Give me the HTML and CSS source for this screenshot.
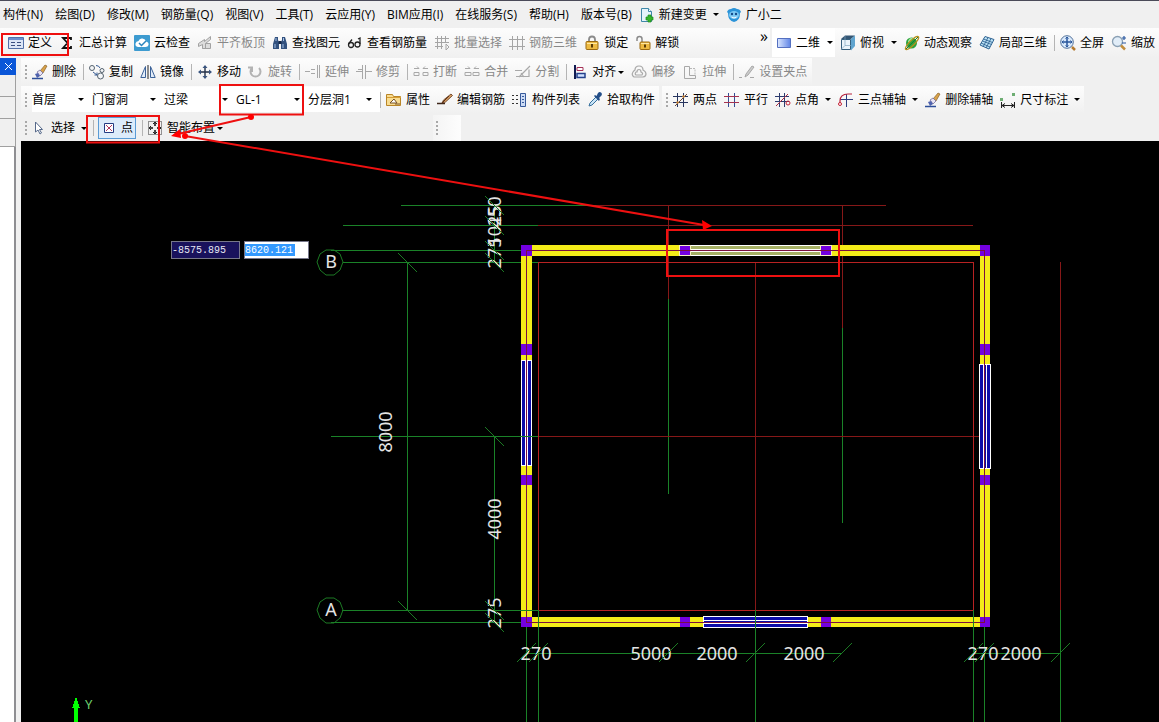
FILE: index.html
```
<!DOCTYPE html>
<html lang="zh-CN">
<head>
  <meta charset="UTF-8">
  <title>钢筋算量</title>
  <link rel="stylesheet" href="styles.css">
</head>
<body>
  <!-- Menu bar -->
  <nav class="menu-bar">
    <button class="btn">构件(N)</button>
    <button class="btn">绘图(D)</button>
    <button class="btn">修改(M)</button>
    <button class="btn">钢筋量(Q)</button>
    <button class="btn">视图(V)</button>
    <button class="btn">工具(T)</button>
    <button class="btn">云应用(Y)</button>
    <button class="btn">BIM应用(I)</button>
    <button class="btn">在线服务(S)</button>
    <button class="btn">帮助(H)</button>
    <button class="btn">版本号(B)</button>
    <button class="btn menu-tool"><svg class="icon" viewBox="0 0 16 16"><path d="M2.500 1.500h7l3 3v10h-10z" fill="#e4f3fb" stroke="#3f87a8"/><path d="M9.500 1.500v3h3" fill="#fff" stroke="#3f87a8"/><path d="M9 8h3v2h2v3h-2v2H9v-2H7v-3h2z" fill="#35b52c" stroke="#1e8a1b" stroke-width=".7"/></svg>新建变更<span class="caret"></span></button>
    <button class="btn menu-tool"><svg class="icon" viewBox="0 0 16 16"><path d="M1 5q1-3 4-3 3-2 6 0 3 0 4 3l-1 1q0 8-6 9-6-1-6-9z" fill="#2b93d8"/><ellipse cx="8" cy="8" rx="5" ry="4" fill="#7cc9f4"/><circle cx="6" cy="7" r="1.200" fill="#144b8a"/><circle cx="10" cy="7" r="1.200" fill="#144b8a"/><path d="M5.500 10q2.500 2 5 0" fill="none" stroke="#fff"/></svg>广小二</button>
  </nav>

  <!-- Main toolbar -->
  <div class="main-bar">
    <div class="group main-group">
      <button class="btn"><svg class="icon" viewBox="0 0 16 16"><path d="M.5 2.500h15v11H.5z" fill="#dce6f6" stroke="#5270a8"/><path d="M1 3h14v2H1z" fill="#6c8fce"/><path d="M3 7.500h4M3 10.500h4M9 7.500h4M9 10.500h4" stroke="#3a4f80"/></svg>定义</button>
      <button class="btn"><svg class="icon" viewBox="0 0 16 16"><path d="M12 5V3H4l4.500 5L4 13h8v-2" fill="none" stroke="#111" stroke-width="1.800"/></svg>汇总计算</button>
      <button class="btn"><svg class="icon" viewBox="0 0 16 16"><rect width="16" height="16" rx="1" fill="#3d9bd0"/><path d="M4 12q-3-.5-2.500-3.500Q2 6 4.500 6 5.500 3 8.500 3.500q3 .5 3.500 3 3 .5 2.500 3.500-.5 2-3 2z" fill="#fff"/><path d="M5 8l2.500 2.500L12 6" fill="none" stroke="#2b84bd" stroke-width="1.500"/></svg>云检查</button>
      <button class="btn" disabled><svg class="icon" viewBox="0 0 16 16"><path d="M1.500 8.500l6-4v2l6-5v3l-5 4v5h-3v-4l-4 2zM8.500 8.500h5v5h-8" fill="#dcdcdc" stroke="#a2a2a2"/></svg>平齐板顶</button>
      <button class="btn"><svg class="icon" viewBox="0 0 16 16"><path d="M3 2h3v3l1 2v7H1V9zM10 2h3l2 7v5H9V7l1-2z" fill="#33527f"/><path d="M6.500 6h3v3h-3z" fill="#16294a"/><path d="M3 9v4M11 9v4M4 3v3M11.500 3v3" stroke="#a9c3e8"/></svg>查找图元</button>
      <button class="btn"><svg class="icon" viewBox="0 0 16 16"><g fill="none" stroke="#222" stroke-width="1.300"><circle cx="4" cy="10" r="2.500"/><circle cx="10.500" cy="9.500" r="2.500"/><path d="M1.500 9L5 4.500M13 9V3l-2 1"/></g></svg>查看钢筋量</button>
      <button class="btn" disabled><svg class="icon" viewBox="0 0 16 16"><path d="M1 3.500h14M1 7.500h14M1 11.500h8M3.500 1v13M7.500 1v13M11.500 1v7M12 9v6l3-3z" fill="none" stroke="#a5a5a5"/></svg>批量选择</button>
      <button class="btn" disabled><svg class="icon" viewBox="0 0 16 16"><path d="M0 4.500h16M0 11.500h16M3.500 1v14M8.500 1v14M13.500 1v14" fill="none" stroke="#a5a5a5"/></svg>钢筋三维</button>
      <button class="btn"><svg class="icon" viewBox="0 0 16 16"><path d="M5 8V4.500q0-3 3-3t3 3V8" fill="none" stroke="#8a8a8a" stroke-width="1.800"/><rect x="2" y="6.500" width="12" height="8" rx="1" fill="#edba42" stroke="#9b6a12"/><path d="M3 8.500h10" stroke="#ffe8a2"/><path d="M8 9v3.500" stroke="#5a3b06" stroke-width="2"/></svg>锁定</button>
      <button class="btn"><svg class="icon" viewBox="0 0 16 16"><path d="M2 6V4q0-2.500 2.500-2.500T7 4v4" fill="none" stroke="#8a8a8a" stroke-width="1.500"/><rect x="5" y="7" width="10" height="7.500" rx="1" fill="#edba42" stroke="#9b6a12"/><path d="M6 8.500h8" stroke="#ffe8a2"/><path d="M10 9.500V12.500" stroke="#5a3b06" stroke-width="2"/></svg>解锁</button>
      <button class="btn more" aria-label="更多">»</button>
    </div>
    <div class="group view-group">
      <div class="mode">
        <svg class="icon" viewBox="0 0 16 16"><defs><linearGradient id="blue"><stop stop-color="#dbe7ff"/><stop offset="1" stop-color="#5f84e6"/></linearGradient></defs><path d="M1.500 3.500h13v9h-13z" fill="url(#blue)" stroke="#5570c0"/></svg>
        <div class="combo"><select class="combo-field" aria-label="视图模式"><option>二维</option></select></div>
      </div>
      <button class="btn"><svg class="icon" viewBox="0 0 16 16"><path d="M1 4l4-3.500h10L11 4z" fill="#345674"/><path d="M11 4l4-3.500V11l-4 4.500z" fill="#5fa4cf"/><path d="M1.500 4.500h9v10h-9z" fill="#e9f4fb" stroke="#345f7d"/><path d="M5 1v9.500l-4 4M5 10.500h6" stroke="#7fa5bf" fill="none" stroke-width=".7"/></svg>俯视<span class="caret far"></span></button>
      <button class="btn"><svg class="icon" viewBox="0 0 16 16"><circle cx="7.500" cy="8" r="5.500" fill="#2ba33c"/><path d="M4 6q2-4 5-3-1 3-5 5z" fill="#9de79c"/><ellipse cx="8" cy="8" rx="9" ry="2.500" transform="rotate(-45 8 8)" fill="none" stroke="#b8901c" stroke-width="1.200"/><path d="M2 14L14 2" stroke="#1c7a30"/></svg>动态观察</button>
      <button class="btn"><svg class="icon" viewBox="0 0 16 16"><path d="M6 1.500l9 3-5 9.500-9-4z" fill="#bfe4f7" stroke="#306493"/><path d="M3.500 6l9 3.500M9 2.500L4 12M12 3.500L7 13M4.500 4l9 3.500M2 8l9 4" fill="none" stroke="#306493" stroke-width=".9"/></svg>局部三维</button>
      <span class="sep"></span>
      <button class="btn"><svg class="icon" viewBox="0 0 16 16"><circle cx="7" cy="7" r="6.300" fill="#d9e9fb" stroke="#52719a"/><path d="M7 2v10M2 7h10" stroke="#28569c" stroke-width="1.500"/><path d="M5.500 3.500L7 2l1.500 1.500M5.500 10.500L7 12l1.500-1.500M3.500 5.500L2 7l1.500 1.500M10.500 5.500L12 7l-1.500 1.500" fill="none" stroke="#28569c"/><path d="M12 12l3 3" stroke="#b57a30" stroke-width="2.500"/></svg>全屏</button>
      <button class="btn"><svg class="icon" viewBox="0 0 16 16"><circle cx="6.500" cy="6.500" r="5" fill="#e1edf8" stroke="#8aa0b4" stroke-width="1.300"/><path d="M10 10.500l4 4" stroke="#c08c3c" stroke-width="2.500"/><path d="M13 1v4M11 3h4M11 8h4" stroke="#2857a0" stroke-width="1.200"/></svg>缩放</button>
    </div>
  </div>

  <div class="work">
    <!-- Docked panel, folded to the left -->
    <aside class="dock">
      <button class="dock-close" aria-label="关闭"><svg width="9" height="9" viewBox="0 0 9 9"><path d="M1 1l7 7M8 1L1 8" stroke="#fff"/></svg></button>
      <div class="dock-row"></div>
      <div class="dock-row"></div>
      <div class="dock-row"></div>
      <div class="dock-list"></div>
    </aside>

    <main class="stage">
      <!-- Edit toolbar -->
      <div class="bar">
        <div class="group">
          <span class="grip"></span>
          <button class="btn"><svg class="icon" viewBox="0 0 16 16"><path d="M8 7l5-6 2 1-4 7z" fill="#d8a24a" stroke="#7b5217" stroke-width=".6"/><path d="M5 8l3-2 3 3-3 3z" fill="#e8e3f2" stroke="#66608f" stroke-width=".7"/><path d="M3 10l3-1 2 3-3 2z" fill="#4f62ae"/><path d="M0 14.500h11" stroke="#2c4e98" stroke-width="1.500"/></svg>删除</button>
          <span class="sep"></span>
          <button class="btn"><svg class="icon" viewBox="0 0 16 16"><g fill="#f4f6f8" stroke="#55626e"><circle cx="3" cy="4" r="2.500"/><circle cx="13" cy="6.500" r="2"/><circle cx="11.500" cy="12" r="3"/></g><path d="M7 1.500q3 0 4 2.500M4 8l4 3M8 8.500V11H5.500" fill="none" stroke="#345a93"/></svg>复制</button>
          <button class="btn"><svg class="icon" viewBox="0 0 16 16"><path d="M5.500 2.500v11H.8zM10.500 2.500v11h4.700z" fill="#e3edf9" stroke="#3c6298"/><path d="M8 1v14" stroke="#222"/></svg>镜像</button>
          <span class="sep"></span>
          <button class="btn"><svg class="icon" viewBox="0 0 16 16"><path d="M8 2v12M2 8h12" stroke="#222f47" stroke-width="1.400"/><path d="M8 1L5.500 4h5zM8 15l-2.500-3h5zM1 8l3-2.500v5zM15 8l-3-2.500v5z" fill="#3a5580"/></svg>移动</button>
          <button class="btn" disabled><svg class="icon" viewBox="0 0 16 16"><path d="M4 4a5 5 0 1 0 7 0M4 8V3.500H0" fill="none" stroke="#b3b3b3" stroke-width="2"/></svg>旋转</button>
          <span class="sep"></span>
          <button class="btn" disabled><svg class="icon" viewBox="0 0 16 16"><path d="M0 7.500h5M6 5.500h4M6 9.500h4M12.500 1v13M14.500 1v13" stroke="#a8a8a8"/></svg>延伸</button>
          <button class="btn" disabled><svg class="icon" viewBox="0 0 16 16"><path d="M0 7.500h6M10 7.500h6M6.500 1v14M9.500 1v14M2 5.500h4" stroke="#a8a8a8"/></svg>修剪</button>
          <span class="sep"></span>
          <button class="btn" disabled><svg class="icon" viewBox="0 0 16 16"><path d="M1 8.500h5v3H1zM10 8.500h5v3h-5zM1 4.500h5l-2-2M12 2.500l-2 2h5" fill="none" stroke="#a8a8a8"/></svg>打断</button>
          <button class="btn" disabled><svg class="icon" viewBox="0 0 16 16"><path d="M1 8.500h6v3H1zM9 8.500h6v3H9zM1 4.500h5l-2-2M12 2.500l-2 2h5" fill="none" stroke="#a8a8a8"/></svg>合并</button>
          <button class="btn" disabled><svg class="icon" viewBox="0 0 16 16"><path d="M0 6.500h7M1 12.500h13v-7M4 13L15 2M6 9l3 4" fill="none" stroke="#a8a8a8" stroke-width="1.200"/></svg>分割</button>
          <span class="sep"></span>
          <button class="btn tight"><svg class="icon" viewBox="0 0 16 16"><path d="M3 1v14" stroke="#101b52" stroke-width="2"/><path d="M5 3.500h6v3H5z" fill="#fff" stroke="#a53057"/><path d="M5 9.500h8v4H5z" fill="#cfe0ff" stroke="#24418c" stroke-width="1.500"/></svg>对齐<span class="caret"></span></button>
          <button class="btn" disabled><svg class="icon" viewBox="0 0 16 16"><path d="M3 13q-3-2-1-5 1-1.500 2-2 0-4 4-4t4 4q3 1.500 3 4t-3 3zM5 11q-1.500-1 0-3h1q0-2.500 2-2.500T10 8q2.500 1 1 3z" fill="none" stroke="#a8a8a8" stroke-width="1.200"/></svg>偏移</button>
          <button class="btn" disabled><svg class="icon" viewBox="0 0 16 16"><path d="M2.500 14.500v-12h5v9h6v3z" fill="none" stroke="#a8a8a8"/><path d="M8 4.500h5v6" fill="none" stroke="#b8b8b8" stroke-dasharray="2 1"/></svg>拉伸</button>
          <span class="sep"></span>
          <button class="btn" disabled><svg class="icon" viewBox="0 0 16 16"><path d="M0 13.500h3M6 13l1-3 6-8 2 1-6 8zM11 13.500h4" fill="#ccc" stroke="#a8a8a8"/></svg>设置夹点</button>
        </div>
      </div>

      <!-- Component toolbar -->
      <div class="bar component-bar">
        <div class="group">
          <span class="grip"></span>
          <div class="combos">
            <div class="combo floor"><select class="combo-field" aria-label="楼层"><option>首层</option></select></div>
            <div class="combo"><select class="combo-field" aria-label="构件类别"><option>门窗洞</option></select></div>
            <div class="combo"><select class="combo-field" aria-label="构件类型"><option>过梁</option></select></div>
            <div class="combo"><select class="combo-field" aria-label="构件名称"><option>GL-1</option></select></div>
            <div class="combo"><select class="combo-field" aria-label="分层"><option>分层洞1</option></select></div>
          </div>
          <span class="sep first"></span>
          <button class="btn"><svg class="icon" viewBox="0 0 16 16"><path d="M.5 2.500h6l1 2h7v9H.5z" fill="#f8dc91" stroke="#b98527"/><path d="M1 5.500h14" stroke="#d69d33"/><path d="M4 11l4-4 3 4zM9 12h5" fill="#fff" stroke="#775126"/></svg>属性</button>
          <button class="btn"><svg class="icon" viewBox="0 0 16 16"><path d="M0 11.500h8" stroke="#3f2719" stroke-width="1.500"/><path d="M5 11l1.500-3L14 2l1.500 1.500L8.500 10z" fill="#d39b60" stroke="#5d3216" stroke-width=".8"/><path d="M5 11l7-7" stroke="#5d3216"/></svg>编辑钢筋</button>
          <button class="btn"><svg class="icon" viewBox="0 0 16 16"><path d="M0 3.500h2M4 3.500h2M0 7.500h2M4 7.500h2M0 11.500h2M4 11.500h2" stroke="#333"/><path d="M8.500 1.500h5v13h-5z" fill="#cddcf5" stroke="#375a9b"/><path d="M10 4.500h2M10 7.500h2M10 10.500h2" stroke="#375a9b"/></svg>构件列表</button>
          <button class="btn"><svg class="icon" viewBox="0 0 16 16"><path d="M2 14l1-3 6-6 2 2-6 6z" fill="#c9e4f7" stroke="#366f9c"/><path d="M7 4l5 5 1-2-1-1 2.500-2.500q1-2-.5-3t-3 .5L9.500 4 8 3z" fill="#234e88"/></svg>拾取构件</button>
        </div>
        <div class="group">
          <span class="grip"></span>
          <button class="btn"><svg class="icon" viewBox="0 0 16 16"><path d="M4.500 1v14M10.500 1v14M0 4.500h15M0 10.500h15" stroke="#27355f"/><path d="M2 14L14 2" stroke="#6f4c3a"/><circle cx="4.500" cy="10.500" r="1.200" fill="#c48031"/><circle cx="10.500" cy="4.500" r="1.200" fill="#c48031"/></svg>两点</button>
          <button class="btn"><svg class="icon" viewBox="0 0 16 16"><path d="M4.500 1v14M10.500 1v14" stroke="#354c94"/><path d="M0 4.500h15M0 10.500h15" stroke="#a63350"/></svg>平行</button>
          <button class="btn"><svg class="icon" viewBox="0 0 16 16"><path d="M4.500 1v14M9.500 1v14M0 4.500h14M0 9.500h14" stroke="#2d3c6f"/><path d="M1 14L13 2" stroke="#b02f43"/><circle cx="13" cy="11" r="2" fill="none" stroke="#c52236"/></svg>点角<span class="caret"></span></button>
          <button class="btn"><svg class="icon" viewBox="0 0 16 16"><path d="M8.500 2v13M2 7.500h13" stroke="#2d3c7f"/><path d="M2 12V9q0-7 8-7h4" fill="none" stroke="#b9243e" stroke-width="1.200"/><circle cx="2" cy="12" r="1.500" fill="#fff" stroke="#c52236"/></svg>三点辅轴<span class="caret"></span></button>
          <button class="btn"><svg class="icon" viewBox="0 0 16 16"><path d="M8 7l5-6 2 1-4 7z" fill="#d8a24a" stroke="#7b5217" stroke-width=".6"/><path d="M5 8l3-2 3 3-3 3z" fill="#e8e3f2" stroke="#66608f" stroke-width=".7"/><path d="M3 10l3-1 2 3-3 2z" fill="#4f62ae"/><path d="M0 14.500h11" stroke="#2c4e98" stroke-width="1.500"/></svg>删除辅轴</button>
          <button class="btn"><svg class="icon" viewBox="0 0 16 16"><path d="M1.500 10v6M14.500 10v6M2 13.500h12M5 11.500l-3 2 3 2M11 11.500l3 2-3 2" fill="none" stroke="#222"/><path d="M0 6h3v3H0zM12 1h3v3h-3z" fill="#6eae73"/></svg>尺寸标注<span class="caret"></span></button>
        </div>
      </div>

      <!-- Draw toolbar -->
      <div class="bar draw-bar">
        <div class="group draw-group">
          <span class="grip"></span>
          <button class="btn"><svg class="icon" viewBox="0 0 16 16"><path d="M4.500 2v10l2.500-2 2 4 1.500-1-2-3.500h3z" fill="#fff" stroke="#56698a"/></svg>选择<span class="caret"></span></button>
          <span class="sep"></span>
          <button class="btn pressed"><svg class="icon" viewBox="0 0 16 16"><path d="M3.500 3.500h9v9h-9z" fill="#fff" stroke="#243b82"/><path d="M5 5l6 6M11 5l-6 6" stroke="#b43b62"/></svg>点</button>
          <span class="sep"></span>
          <button class="btn tight"><svg class="icon" viewBox="0 0 16 16"><path d="M1.500 1.500h13v13h-13z" fill="none" stroke="#333" stroke-dasharray="1 1"/><path d="M8 2v4M8 10v4M2 8h4M10 8h4" stroke="#111" stroke-width="1.500"/><path d="M6 4l2-2 2 2M6 12l2 2 2-2M4 6L2 8l2 2M12 6l2 2-2 2" fill="none" stroke="#222"/></svg>智能布置<span class="caret"></span></button>
        </div>
        <div class="group empty-group"><span class="grip"></span></div>
      </div>

      <!-- Drawing area -->
      <div class="canvas">
        <svg class="plan" aria-label="平面图">
          <g transform="translate(-21 -141)">
            <g class="green">
              <path d="M401 205.500H596M343 225.500H538M331 250.500H521M343 262.500H538M331 436.500H538M342 610.500H538M331 622.500H521"/>
              <path d="M407.500 262V610M494.500 205V262M494.500 436V622M668.500 299V494M842.500 328V523"/>
              <path d="M526 653.500H842M973 653.500H1060"/>
            </g>
            <g class="axis">
              <path d="M596 205.500H886M538 225.500H973M668.500 205V299M842.500 205V328M755.500 262V610M1060.500 262V610M538 436.500H985"/>
            </g>
            <path class="room" d="M538.500 262.500H973.500V610.500H538.500z"/>

            <!-- Walls -->
            <path class="wall" d="M521 245H990V256H521zM521 617H990V627H521zM521 245H532V627H521zM980 245H990V627H980z"/>
            <path class="column" d="M521 245h11v11h-11zM980 245h10v11h-10zM521 344h11v11h-11zM980 344h10v11h-10zM521 475h11v10h-11zM980 475h10v10h-10zM521 617h11v10h-11zM980 617h10v10h-10zM680 617h10v10h-10zM821 617h10v10h-10z"/>

            <!-- Windows -->
            <g class="window">
              <path d="M521.500 360.500h10v105h-10zM525.500 360V466M527.500 360V466"/>
              <path d="M979.500 364.500h11v104h-11zM983.500 364V469M986.500 364V469"/>
              <path d="M703.500 616.500h104v11h-104zM703 620.500H808M703 623.500H808"/>
            </g>

            <!-- Lintel -->
            <path d="M690 245H821V256H690z" fill="#fff"/>
            <path d="M691 246H820V249H691zM691 252H820V255H691z" fill="#a6b065"/>
            <path d="M679.500 245.500h11v10h-11zM820.500 245.500h11v10h-11z" fill="#7300e0" stroke="#f5eec0"/>
            <path class="center" d="M526.500 250.500H984.500V622.500H526.500z"/>

            <g class="green">
              <path d="M521 436.500H538M521 610.500H538M526.500 627V722M538.500 610V722M755.500 610V722M973.500 610V722M984.500 627V722M1060.500 610V722"/>
            </g>

            <!-- Dimensions -->
            <g class="dim">
              <text x="536" y="660">270</text>
              <text x="651" y="660">5000</text>
              <text x="717" y="660">2000</text>
              <text x="804" y="660">2000</text>
              <text x="983" y="660">270</text>
              <text x="1021" y="660">2000</text>
              <text transform="translate(392 432) rotate(-90)">8000</text>
              <text transform="translate(501 519) rotate(-90)">4000</text>
              <text transform="translate(501 613) rotate(-90)">275</text>
              <text transform="translate(501 253) rotate(-90)">275</text>
              <text transform="translate(501 226) rotate(-90)">1025</text>
              <text transform="translate(501 212) rotate(-90)">450</text>
              <text x="331" y="268">B</text>
              <text x="331" y="616">A</text>
            </g>
            <path class="tick" d="M398 253l19 19M398 601l19 19M485 196l19 19M485 216l19 19M485 241l19 19M485 253l19 19M485 427l19 19M485 601l19 19M485 613l19 19M517 662l19-19M529 662l19-19M659 662l19-19M746 662l19-19M833 662l19-19M964 662l19-19M975 662l19-19M1051 662l19-19"/>
            <path class="bubble" d="M326 250h8l6 4 3 8-3 8-6 5h-8l-6-5-3-8 3-8zM326 598h8l6 4 3 8-3 8-6 5h-8l-6-5-3-8 3-8z"/>

            <!-- Coordinate arrow -->
            <path d="M76 697l4 11h-2v14h-4v-14h-2z" fill="#0f0"/>
            <text class="axis-name" x="85" y="709">Y</text>
          </g>
        </svg>
        <div class="coords">
          <input class="coord" value="-8575.895" aria-label="X">
          <input class="coord active" value="8620.121" aria-label="Y">
        </div>
      </div>
    </main>
  </div>

  <!-- Red marks over the window -->
  <svg class="marks">
    <path class="mark-box" d="M2 34H68V55H2zM220 85H303V114.500H220zM87 116H159V142.500H87zM667 230H839V276H667z"/>
    <path class="mark-line" d="M251 117L178 134M185 136L704 225"/>
    <path d="M171 136l9-7 1 9zM712 226l-10-6 1 10z" fill="#f00"/>
    <circle cx="251" cy="117" r="3" fill="#f00"/>
    <circle cx="185" cy="136" r="3" fill="#f00"/>
  </svg>
</body>
</html>
```

FILE: styles.css
```
* {
  box-sizing: border-box;
}

body {
  margin: 0;
  height: 100vh;
  display: flex;
  flex-direction: column;
  overflow: hidden;
  position: relative;
  border-top: 1px solid #4a4a58;
  background: #f0f0f0;
  color: #000;
  font: 12px/16px "Open Sans", "Noto Sans CJK SC", sans-serif;
  white-space: nowrap;
}

/* ========== BUTTONS ========== */
.btn {
  display: flex;
  align-items: center;
  gap: 4px;
  flex: none;
  padding: 0;
  border: 0;
  background: none;
  color: inherit;
  font: inherit;
}

.btn:disabled {
  color: #888;
}

.icon {
  width: 16px;
  height: 16px;
  flex: none;
}

.caret {
  margin-left: 2px;
  border: 3px solid transparent;
  border-top-color: #000;
  border-bottom: 0;
}

.caret.far {
  margin-left: 3px;
}

.tight .caret {
  margin-left: -2px;
}

.pressed {
  height: 22px;
  padding: 0 2px;
  border: 1px solid #5a9bd5;
  background: #dcebfa;
}

/* ========== MENU AND MAIN BAR ========== */
.menu-bar {
  display: flex;
  align-items: center;
  gap: 12px;
  height: 27px;
  flex: none;
  padding-left: 3px;
}

.menu-tool {
  margin-left: -5px;
}

.main-bar {
  display: flex;
  gap: 2px;
  height: 30px;
  padding-bottom: 1px;
  flex: none;
}

.group {
  display: flex;
  align-items: center;
  gap: 7px;
  flex: none;
  background: linear-gradient(#fdfdfd, #f0f0f0);
}

.main-group {
  flex: 1;
  padding: 0 2px 0 8px;
}

.view-group {
  padding-right: 4px;
}

.more {
  align-self: flex-start;
  margin-left: auto;
  font-size: 16px;
}

.mode {
  display: flex;
  align-items: center;
  gap: 4px;
  align-self: stretch;
  padding: 0 2px 0 4px;
  margin-right: -2px;
  background: #fff;
}

.mode .combo {
  width: 37px;
}

.sep {
  width: 1px;
  height: 16px;
  margin-right: -2px;
  background: #b4b4b4;
}

.sep.first {
  margin-left: -7px;
}

/* ========== LEFT DOCK ========== */
.work {
  display: flex;
  flex: 1;
  min-height: 0;
}

.dock {
  display: flex;
  flex-direction: column;
  flex: none;
  width: 16px;
  margin-right: 5px;
}

.dock-close {
  height: 17px;
  padding: 0;
  border: 0;
  background: #0a56d8;
  line-height: 1px;
}

.dock-row {
  height: 22px;
  border-right: 1px solid #a0a0a0;
  border-bottom: 1px solid #a0a0a0;
}

.dock-row:nth-of-type(3) {
  height: 28px;
}

.dock-list {
  flex: 1;
  border-right: 2px solid #8e8e92;
  background: #fff;
}

/* ========== TOOLBARS ========== */
.stage {
  display: flex;
  flex-direction: column;
  flex: 1;
  min-width: 0;
}

.bar {
  display: flex;
  height: 28px;
  flex: none;
}

.bar .group {
  gap: 7px;
  padding: 0 5px 0 4px;
}

.component-bar {
  height: 27px;
  gap: 3px;
}

.component-bar .group {
  padding-right: 4px;
}

.draw-bar {
  padding-top: 2px;
}

.grip {
  width: 2px;
  height: 14px;
  margin-right: -2px;
  background: repeating-linear-gradient(#a8a8a8 0 2px, transparent 2px 4px);
}

.bar .draw-group {
  gap: 6px;
  padding-right: 210px;
  background: #f0f0f0;
}

.bar .empty-group {
  width: 28px;
  padding-left: 3px;
  background: linear-gradient(90deg, #f4f4f4, #fdfdfd);
}

.combos {
  display: flex;
  align-self: stretch;
  margin: 1px 0;
  background: #fff;
}

.combo {
  position: relative;
  display: flex;
  align-items: center;
  width: 72px;
}

.combo.floor {
  width: 60px;
}

.combo-field {
  width: 100%;
  padding: 0;
  border: 0;
  background: none;
  appearance: none;
  color: inherit;
  font: inherit;
}

.combo::after {
  content: "";
  position: absolute;
  right: 8px;
  border: 3px solid transparent;
  border-top-color: #000;
  border-bottom: 0;
  pointer-events: none;
}

.mode .combo::after {
  right: 0;
}

/* ========== DRAWING ========== */
.canvas {
  position: relative;
  flex: 1;
  min-height: 0;
  background: #000;
}

.plan {
  display: block;
  width: 100%;
  height: 100%;
  fill: none;
  shape-rendering: crispEdges;
}

.green {
  stroke: #1a8228;
}

.axis {
  stroke: #861818;
}

.room {
  stroke: #b82222;
}

.wall {
  fill: #f4ec18;
}

.column {
  fill: #7300e0;
}

.window {
  fill: #0c0ca8;
  stroke: #fff;
}

.center {
  stroke: #7a1040;
}

.tick,
.bubble {
  stroke: #1c7a24;
  shape-rendering: auto;
}

.dim text {
  fill: #e4e4e4;
  font: 18px "Noto Sans", sans-serif;
  text-anchor: middle;
}

.axis-name {
  fill: #6fd06f;
  font: 13px "Noto Sans", sans-serif;
}

/* Typed coordinates next to the cursor */
.coords {
  position: absolute;
  left: 150px;
  top: 100px;
  display: flex;
  gap: 4px;
}

.coord {
  width: 69px;
  height: 18px;
  padding: 0;
  border: 1px solid #77778a;
  border-radius: 0;
  background: #19125c;
  color: #e8e8f4;
  font: 10px/16px "Liberation Mono", monospace;
}

.coord.active {
  width: 65px;
  background: linear-gradient(#3399ff, #3399ff) 0 2px / 50px 12px no-repeat #fff;
  color: #fff;
}

/* ========== MARKS ========== */
.marks {
  position: absolute;
  left: 0;
  top: -1px;
  width: 100%;
  height: 100vh;
  pointer-events: none;
}

.mark-box,
.mark-line {
  fill: none;
  stroke: #ee1010;
  stroke-width: 2;
}
```
